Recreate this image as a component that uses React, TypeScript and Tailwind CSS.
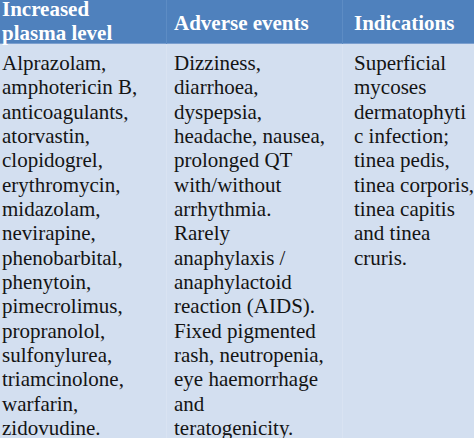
const col1 = [
  "Alprazolam,",
  "amphotericin B,",
  "anticoagulants,",
  "atorvastin,",
  "clopidogrel,",
  "erythromycin,",
  "midazolam,",
  "nevirapine,",
  "phenobarbital,",
  "phenytoin,",
  "pimecrolimus,",
  "propranolol,",
  "sulfonylurea,",
  "triamcinolone,",
  "warfarin,",
  "zidovudine.",
];

const col2 = [
  "Dizziness,",
  "diarrhoea,",
  "dyspepsia,",
  "headache, nausea,",
  "prolonged QT",
  "with/without",
  "arrhythmia.",
  "Rarely",
  "anaphylaxis /",
  "anaphylactoid",
  "reaction (AIDS).",
  "Fixed pigmented",
  "rash, neutropenia,",
  "eye haemorrhage",
  "and",
  "teratogenicity.",
];

const col3 = [
  "Superficial",
  "mycoses",
  "dermatophyti",
  "c infection;",
  "tinea pedis,",
  "tinea corporis,",
  "tinea capitis",
  "and tinea",
  "cruris.",
];

const Lines = ({ lines }: { lines: string[] }) => (
  <>
    {lines.map((l, i) => (
      <p key={i} className="whitespace-nowrap">
        {l}
      </p>
    ))}
  </>
);

export default function App() {
  return (
    <main className="w-[474px] h-[438px] overflow-hidden bg-[#d3dff0] font-['Liberation_Serif'] text-[21px]/[24.33px] text-[#141414]">
      <header className="grid grid-cols-[166px_176px_132px] h-[44px] bg-[#4f81bd] text-white font-bold border-b border-[#7b9fcf]">
        <div className="pl-[2px] -mt-[3px]">
          <p>Increased</p>
          <p>plasma level</p>
        </div>
        <div className="pl-[7px] flex items-center border-l border-[#5d8cc4]">Adverse events</div>
        <div className="pl-[11px] flex items-center border-l border-[#5d8cc4]">Indications</div>
      </header>
      <section className="grid grid-cols-[166px_176px_132px] h-[394px]">
        <div className="pl-[2px] pt-[7px]">
          <Lines lines={col1} />
        </div>
        <div className="pl-[7px] pt-[7px] border-l border-[#d9e3f2]">
          <Lines lines={col2} />
        </div>
        <div className="pl-[11px] pt-[7px] border-l border-[#d9e3f2]">
          <Lines lines={col3} />
        </div>
      </section>
    </main>
  );
}
